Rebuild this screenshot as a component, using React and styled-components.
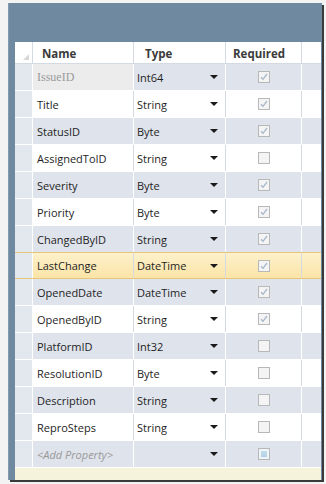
import React from 'react';
import styled, { createGlobalStyle } from 'styled-components';

const GlobalStyle = createGlobalStyle`
  html, body {
    margin: 0;
    padding: 0;
    background: #f3f3f3;
  }
  body {
    font-family: "Open Sans", "Noto Sans", sans-serif;
  }
`;

const Page = styled.div`
  width: 326px;
  height: 484px;
  padding: 3px 0 0 8px;
  box-sizing: border-box;
`;

const Frame = styled.div`
  width: 314px;
  height: 477px;
  box-sizing: border-box;
  padding: 39px 1px 0 6px;
  background: #6f89a1;
  box-shadow: 2px 2px 0 #3a3a3a;
  display: flex;
  flex-direction: column;
  border-left: 1px solid #8299ae;
`;

const Grid = styled.div`
  display: flex;
  flex-direction: column;
  background: #ffffff;
`;

const Columns = `
  display: grid;
  grid-template-columns: 18px 101px 92px 76px 1fr;
`;

const HeaderRow = styled.div`
  ${Columns}
  height: 22px;
  box-sizing: border-box;
  background: #ffffff;
  border-bottom: 1px solid #d4dae3;
`;

const HeaderCell = styled.div`
  display: flex;
  align-items: center;
  padding-left: ${p => p.$pad || 8}px;
  padding-top: 1px;
  font-size: 11.5px;
  font-weight: 700;
  color: #3b3b3b;
  border-right: 1px solid #d4dae3;
  position: relative;

  &:last-child {
    border-right: none;
  }
`;

const SortGlyph = styled.span`
  position: absolute;
  right: 3px;
  bottom: 3px;
  width: 0;
  height: 0;
  border-left: 6px solid transparent;
  border-bottom: 6px solid #d8d8d8;
`;

const Row = styled.div`
  ${Columns}
  height: 27px;
  box-sizing: border-box;
  background: ${p =>
    p.$selected
      ? 'linear-gradient(#fdf1cc, #fbe4a6)'
      : p.$alt
      ? '#dfe3eb'
      : '#ffffff'};
  border-bottom: 1px solid ${p => (p.$selected ? '#e7c57a' : '#ffffff')};
  margin-top: ${p => (p.$selected ? '-1px' : '0')};
  border-top: ${p => (p.$selected ? '1px solid #e7c57a' : 'none')};
`;

const Cell = styled.div`
  display: flex;
  align-items: center;
  padding-left: ${p => p.$pad || 0}px;
  padding-right: ${p => p.$padR || 0}px;
  justify-content: ${p => p.$justify || 'flex-start'};
  font-size: ${p => (p.$serif ? '12px' : '11px')};
  color: ${p => (p.$muted ? '#9a9a9a' : '#1e1e1e')};
  font-style: ${p => (p.$italic ? 'italic' : 'normal')};
  font-family: ${p => (p.$serif ? '"Liberation Serif", serif' : 'inherit')};
  background: ${p => p.$bg || 'transparent'};
  border-right: 1px solid ${p => (p.$alt ? '#ffffff' : '#d4dae3')};
  white-space: nowrap;
  overflow: hidden;

  &:last-child {
    border-right: none;
  }
`;

const Selector = styled.div`
  background: #e3e7ee;
  border-right: 1px solid #ffffff;
`;

const Arrow = styled.span`
  width: 0;
  height: 0;
  border-left: 4px solid transparent;
  border-right: 4px solid transparent;
  border-top: 4px solid #1a1a1a;
  margin-left: auto;
`;

const Box = styled.span`
  width: 12px;
  height: 12px;
  box-sizing: border-box;
  border: 1px solid #b8b8b8;
  background: ${p => (p.$new ? 'linear-gradient(#cfe3ef, #a9cbe0)' : '#f4f4f4')};
  box-shadow: ${p => (p.$new ? 'inset 0 0 0 2px #eef4f8' : 'none')};
  display: flex;
  align-items: center;
  justify-content: center;
`;

const Footer = styled.div`
  flex: 1;
  background: #f5f3dc;
`;

const Check = () => (
  <svg width="8" height="8" viewBox="0 0 8 8">
    <path d="M1 4.2 L3 6.3 L7 1" fill="none" stroke="#a9b8cc" strokeWidth="1.3" />
  </svg>
);

const rows = [
  { name: 'IssueID', type: 'Int64', req: true, key: true },
  { name: 'Title', type: 'String', req: true },
  { name: 'StatusID', type: 'Byte', req: true },
  { name: 'AssignedToID', type: 'String', req: false },
  { name: 'Severity', type: 'Byte', req: true },
  { name: 'Priority', type: 'Byte', req: true },
  { name: 'ChangedByID', type: 'String', req: true },
  { name: 'LastChange', type: 'DateTime', req: true, selected: true },
  { name: 'OpenedDate', type: 'DateTime', req: true },
  { name: 'OpenedByID', type: 'String', req: true },
  { name: 'PlatformID', type: 'Int32', req: false },
  { name: 'ResolutionID', type: 'Byte', req: false },
  { name: 'Description', type: 'String', req: false },
  { name: 'ReproSteps', type: 'String', req: false },
];

const App = () => {
  return (
    <>
      <GlobalStyle />
      <Page>
        <Frame>
          <Grid>
            <HeaderRow>
              <HeaderCell>
                <SortGlyph />
              </HeaderCell>
              <HeaderCell $pad={9}>Name</HeaderCell>
              <HeaderCell $pad={11}>Type</HeaderCell>
              <HeaderCell $pad={7}>Required</HeaderCell>
              <HeaderCell />
            </HeaderRow>
            {rows.map((row, i) => {
              const alt = i % 2 === 0 && !row.selected;
              return (
                <Row key={row.name} $alt={alt} $selected={row.selected}>
                  <Selector />
                  <Cell
                    $pad={4}
                    $alt={alt}
                    $muted={row.key}
                    $serif={row.key}
                    $bg={row.key ? '#ececec' : undefined}
                  >
                    {row.name}
                  </Cell>
                  <Cell $pad={3} $padR={7} $alt={alt}>
                    {row.type}
                    <Arrow />
                  </Cell>
                  <Cell $justify="center" $alt={alt}>
                    <Box>{row.req && <Check />}</Box>
                  </Cell>
                  <Cell $alt={alt} />
                </Row>
              );
            })}
            <Row $alt>
              <Selector />
              <Cell $pad={4} $alt $muted $italic>
                &lt;Add Property&gt;
              </Cell>
              <Cell $pad={3} $padR={7} $alt>
                <Arrow />
              </Cell>
              <Cell $justify="center" $alt>
                <Box $new />
              </Cell>
              <Cell $alt />
            </Row>
          </Grid>
          <Footer />
        </Frame>
      </Page>
    </>
  );
};

export default App;
